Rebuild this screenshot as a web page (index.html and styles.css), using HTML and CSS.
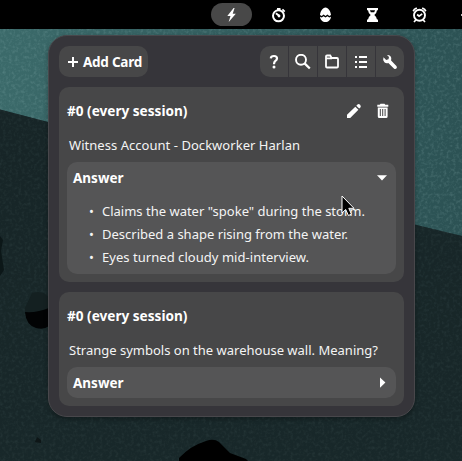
FILE: index.html
```html
<!DOCTYPE html>
<html lang="en">
<head>
<meta charset="utf-8">
<title>Cards</title>
<link rel="stylesheet" href="styles.css">
</head>
<body>
<svg class="wallpaper" viewBox="0 0 462 461" aria-hidden="true">
  <defs>
    <linearGradient id="sea" x1="0" y1="0" x2="1" y2="0"><stop offset="0" stop-color="#3b6a6a"/><stop offset="1" stop-color="#2c5254"/></linearGradient>
    <linearGradient id="hill" x1="0" y1="0" x2="0" y2="1"><stop offset="0" stop-color="#172426"/><stop offset="1" stop-color="#1b2b2d"/></linearGradient>
    <filter id="grain" x="0" y="0" width="1" height="1"><feTurbulence type="fractalNoise" baseFrequency=".32" numOctaves="2" seed="4"/><feColorMatrix values="0 0 0 0 .42  0 0 0 0 .64  0 0 0 0 .64  1.6 0 0 0 -.72"/></filter>
  </defs>
  <rect width="462" height="461" fill="url(#sea)"/>
  <path d="M0 109.500 48 122 406 222.500 462 236V461H0Z" fill="url(#hill)"/>
  <rect width="462" height="461" filter="url(#grain)" opacity=".26"/>
  <path d="M0 109.500 48 122 406 222.500 462 236V461H0Z" fill="#182628" opacity=".6"/>
  <path d="M32 293 38 292 44 293 55 303V314H25V308Z" fill="#142021"/>
  <path d="M25 312Q37 313 49 308V326Q44 330 36 328 26 325 25 312Z" fill="#020304"/>
  <path d="M0 236 3 240 1 251 4 270 0 276Z" fill="#0c1718"/>
  <path d="M35 442 37 437 41 440 41 443Z" fill="#0e1617"/>
  <path d="M179 461V458Q190 446 206 441 214 438 219 442L230 453 246 459 248 461Z" fill="#000"/>
</svg>

<nav class="topbar">
  <span class="tab tab-active"><svg viewBox="0 0 16 16"><path d="M9.600 1 3.300 8.900h3.200L4.700 15 11.800 6.700H8.700L10.600 1Z"/></svg></span>
  <span class="tab"><svg viewBox="0 0 16 16"><circle cx="7.500" cy="8.800" r="5.500" fill="none" stroke="#fff" stroke-width="2"/><path d="M6 1h3.500v2H6ZM12 1.800l2.300 2.200-1.200 1.200-2.300-2.200Z"/><path d="m4.900 6.200 2.900 2.400" stroke="#fff" stroke-width="1.900"/><circle cx="8" cy="9" r="1.400"/></svg></span>
  <span class="tab"><svg viewBox="0 0 16 16"><path d="M7.500.5C4.700.5 2.300 4.400 2 8l1.700 1L5.600 7.600 7.500 9l1.900-1.400L11.300 9 13 8C12.700 4.400 10.300.5 7.500.5ZM2 9.700C2.300 12.800 4.600 15 7.500 15s5.200-2.200 5.500-5.300l-1.700.9L9.400 9.200 7.500 10.600 5.600 9.200l-1.900 1.400Z"/></svg></span>
  <span class="tab"><svg viewBox="0 0 16 16"><path d="M2 1h11v2.200h-1Q11.800 6 9.300 8q2.500 2 2.700 4.600h1V15H2v-2.400h1Q3.200 10 5.700 8 3.200 6 3 3.200H2Z"/><path d="M4.900 3.300h5.200L9.200 5.300H5.800Z" fill="#000"/></svg></span>
  <span class="tab"><svg viewBox="0 0 16 16"><circle cx="7.500" cy="8.200" r="5.500" fill="none" stroke="#fff" stroke-width="1.900"/><path d="m1.200 4.300 1.200-2 2.400-1.200M13.800 4.300l-1.200-2-2.400-1.200M2 15l2-2.200M13 15l-2-2.200M5.100 7.500l2 1.700 3.100-2.400" fill="none" stroke="#fff" stroke-width="1.700"/></svg></span>
  <span class="tab-next"></span>
</nav>

<main class="panel">
  <header class="toolbar">
    <button class="add"><svg viewBox="0 0 10 10"><path d="M4 0h2v4h4v2H6v4H4V6H0V4h4Z"/></svg><span>Add Card</span></button>
    <div class="tools">
      <button><svg viewBox="0 0 16 16"><path d="M4.800 4.300Q5 2 8 2q3 0 3 2.400 0 1.300-1.600 2.500Q8 8 8 10.200" fill="none" stroke="#fff" stroke-width="2.200"/><circle cx="8" cy="13" r="1.500"/></svg></button>
      <button><svg viewBox="0 0 16 16"><circle cx="6" cy="5.800" r="5" fill="none" stroke="#fff" stroke-width="1.900"/><path d="m9.600 9.400 5.200 5.100" stroke="#fff" stroke-width="2.300"/></svg></button>
      <button><svg viewBox="0 0 16 16"><path d="M2 12.500V2.500q0-1 1-1h3.200L7.700 4H13q1 0 1 1v7.500q0 1-1 1H3q-1 0-1-1ZM2 4.300h6" fill="none" stroke="#fff" stroke-width="1.800"/></svg></button>
      <button><svg viewBox="0 0 16 16"><path d="M2 2h2v2H2ZM6 2h8v2H6ZM2 7h2v2H2ZM6 7h8v2H6ZM2 12h2v2H2ZM6 12h8v2H6Z"/></svg></button>
      <button><svg viewBox="0 0 16 16"><path d="M5 .9 7 3 6.500 5.200 4.200 6 1.500 3.200Q.4 6 2.400 8.200q1.600 1.500 3.900.8l5.600 5.400q1.400 1.100 2.500.1 1.100-1.100 0-2.400L9.100 6.600Q10 4.200 8.500 2.300 7.200.8 5 .9Z"/></svg></button>
    </div>
  </header>

  <section class="card">
    <div class="card-head">
      <h2>#0 (every session)</h2>
      <div class="actions">
        <svg viewBox="0 0 16 16"><path d="M1 15v-3.200l8.300-8.100 3.100 3L4.200 15ZM10.300 2.700l1.200-1.200q1.100-1 2.600.2 1.300 1.500.3 2.700l-1.200 1.200Z"/></svg>
        <svg viewBox="0 0 16 16"><path d="M5.500.8h4l.8 1h3v1.900h-11V1.800h2.400Z"/><path d="M2.800 4.600h9.800v8.900q0 1.500-1.500 1.500H4.300q-1.500 0-1.500-1.500ZM4.800 6v7h1V6ZM7.200 6v7h1V6ZM9.600 6v7h1V6Z" fill-rule="evenodd"/></svg>
      </div>
    </div>
    <p class="question question-wide">Witness Account - Dockworker Harlan</p>
    <div class="answer">
      <div class="answer-head">Answer<svg viewBox="0 0 16 16"><path d="M3 5.200h10L8 10.400Z"/></svg></div>
      <ul>
        <li>Claims the water "spoke" during the storm.</li>
        <li>Described a shape rising from the water.</li>
        <li class="question-wide">Eyes turned cloudy mid-interview.</li>
      </ul>
    </div>
  </section>

  <section class="card">
    <div class="card-head"><h2>#0 (every session)</h2></div>
    <p class="question">Strange symbols on the warehouse wall. Meaning?</p>
    <div class="answer">
      <div class="answer-head">Answer<svg viewBox="0 0 16 16"><path d="M6 2.500v10.200L11.400 7.600Z"/></svg></div>
    </div>
  </section>
</main>

<svg class="cursor" viewBox="0 0 14 22"><path d="M1 1v17l3.700-3.500L7.400 20.500l3-1.300L7.800 13.300H13Z" fill="#000" stroke="#fff" stroke-width="1"/></svg>
</body>
</html>
```

FILE: styles.css
```css
* { box-sizing: border-box; }
body {
  margin: 0;
  width: 462px;
  height: 461px;
  overflow: hidden;
  background: #182527;
  color: #fff;
  font: 13px/20px "Noto Sans", sans-serif;
}
svg { display: block; fill: #fff; }
.wallpaper { position: absolute; inset: 0; width: 462px; height: 461px; z-index: -1; }

.topbar {
  display: flex;
  align-items: center;
  gap: 6px;
  height: 29px;
  padding: 3px 0 3px 211px;
  background: #000;
  overflow: hidden;
}
.tab {
  flex: none;
  display: flex;
  align-items: center;
  justify-content: center;
  width: 41px;
  height: 23px;
  border-radius: 12px;
}
.tab svg { width: 16px; height: 16px; }
.tab-active { background: #484848; }
.tab-next { flex: none; width: 1px; height: 2px; margin-left: 15px; background: #bbb; }

.panel {
  display: flex;
  flex-direction: column;
  gap: 10px;
  width: 367px;
  height: 382px;
  margin: 6px 0 0 48px;
  padding: 10px;
  border: 1px solid #48474b;
  border-radius: 19px;
  background: #36353a;
  box-shadow: 0 2px 5px rgba(0, 0, 0, .3);
}
.toolbar { display: flex; justify-content: space-between; height: 31px; }
button {
  display: flex;
  align-items: center;
  justify-content: center;
  padding: 0;
  border: 0;
  background: #474748;
  color: #fff;
  font: inherit;
}
.add {
  justify-content: flex-start;
  gap: 5px;
  width: 89px;
  padding-left: 9px;
  border-radius: 10px;
  font-size: 13.5px;
  font-weight: 700;
  letter-spacing: -.25px;
  white-space: nowrap;
}
.add svg { width: 10px; height: 10px; }
.tools { display: flex; gap: 1px; border-radius: 10px; overflow: hidden; }
.tools button { width: 28px; }
.tools svg { width: 16px; height: 16px; }

.card { padding: 8px; border-radius: 10px; background: #474748; }
.card-head { display: flex; align-items: center; justify-content: space-between; height: 32px; }
h2 { margin: 0; font-size: 13.6px; font-weight: 700; }
.actions { display: flex; gap: 13px; padding-right: 5px; }
.actions svg { width: 16px; height: 16px; }
.question { margin: 8px 2px 7px; white-space: nowrap; color: #f4f4f4; }
.question-wide { letter-spacing: .04px; }
.answer { border-radius: 10px; background: #555556; }
.answer-head {
  display: flex;
  align-items: center;
  justify-content: space-between;
  height: 31px;
  padding: 0 6px;
  font-size: 13.5px;
  font-weight: 700;
}
.answer-head svg { width: 16px; height: 16px; }
ul { margin: 0; padding: 7px 0 5px 22px; list-style: none; }
li { display: flex; line-height: 23px; white-space: nowrap; color: #f4f4f4; }
li::before { content: "•"; flex: none; width: 13px; }
.cursor { position: absolute; left: 341px; top: 195px; width: 14px; height: 22px; }
```
